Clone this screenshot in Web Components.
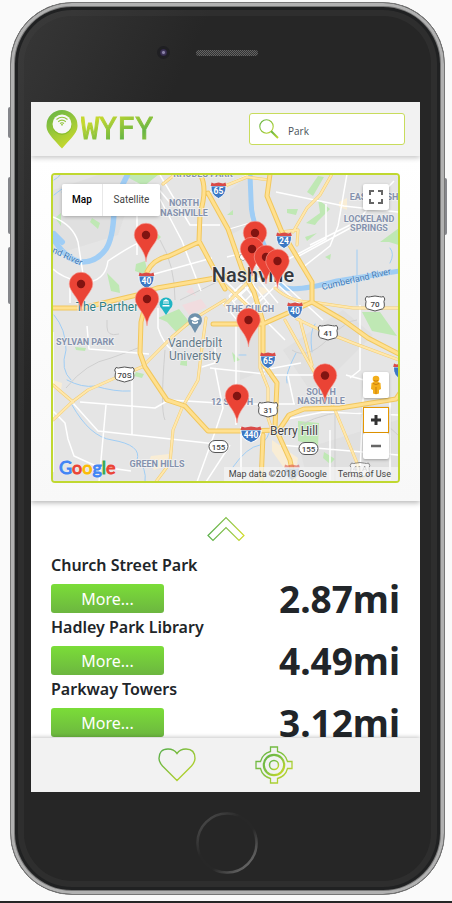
<!DOCTYPE html>
<html lang="en">
<head>
<meta charset="utf-8">
<meta name="viewport" content="width=device-width, initial-scale=1">
<title>WYFY</title>
<style>
html, body { margin: 0; }
body { height: 100vh; box-sizing: border-box; background: #fafafa; border-bottom: 2px solid #262626; padding: 2px 7px 6px 10px; color: #212529; font-family: "Noto Sans", "Open Sans", sans-serif; }
</style>
</head>
<body>
<phone-frame>
  <app-header slot="screen"></app-header>
  <map-panel slot="screen"></map-panel>
  <place-list slot="screen">
    <place-item distance="2.87mi">Church Street Park</place-item>
    <place-item distance="4.49mi">Hadley Park Library</place-item>
    <place-item distance="3.12mi">Parkway Towers</place-item>
  </place-list>
  <app-nav slot="screen"></app-nav>
</phone-frame>
<script>
function define(name, html) {
  const template = document.createElement('template');
  template.innerHTML = html;
  customElements.define(name, class extends HTMLElement {
    constructor() {
      super();
      this.attachShadow({ mode: 'open' }).append(template.content.cloneNode(true));
    }
    connectedCallback() {
      const out = this.shadowRoot.querySelector('[data-distance]');
      if (out) out.textContent = this.getAttribute('distance');
    }
  });
}

define('phone-frame', `
<style>
:host { display: flex; flex-direction: column; position: relative; box-sizing: border-box; height: 100%; padding: 0 24px 0 20px; border: 1px solid #777; border-radius: 62px;
  background: linear-gradient(115deg, #383838 0, #262626 24%) #262626;
  box-shadow: inset 0 0 0 3px #b1b1b1, inset 0 0 0 4px #777, inset 0 0 0 7px #202122, inset 0 0 0 13px rgba(70,70,70,.28); }
.top { flex: none; height: 99px; display: grid; grid-template-columns: 1fr 62px 1fr; align-items: center; padding-left: 3px; }
.camera { justify-self: end; margin-right: 26px; width: 7px; height: 7px; border-radius: 50%; border: 3px solid #1f1f22; background: radial-gradient(circle, #8a82a8 0 1px, #40365a 2px, #28203c 4px); }
.speaker { height: 6px; border-radius: 4px; background: repeating-conic-gradient(#333 0 25%, #646464 0 50%) 0 0 / 2px 2px; }
.screen { flex: 1; min-height: 0; display: flex; flex-direction: column; overflow: hidden; background: #fff; }
.bottom { flex: none; height: 102px; display: grid; place-items: center; padding-left: 3px; }
.home { width: 62px; height: 62px; padding: 0; border: 0; border-radius: 50%; background: none; }
.home svg { display: block; }
.side { position: absolute; left: -3px; width: 2px; background: #85868b; border-radius: 2px 0 0 2px; }
.a { top: 104px; height: 31px; } .b { top: 174px; height: 57px; } .c { top: 244px; height: 57px; }
.d { top: 175px; height: 57px; left: auto; right: -3px; border-radius: 0 2px 2px 0; }
</style>
<i class="side a"></i><i class="side b"></i><i class="side c"></i><i class="side d"></i>
<div class="top"><span class="camera"></span><span class="speaker"></span></div>
<div class="screen"><slot name="screen"></slot></div>
<div class="bottom"><button class="home" aria-label="Home"><svg width="62" height="62" viewBox="0 0 62 62" fill="none"><defs><linearGradient id="h" x1="0" y1="0" x2="1" y2="1"><stop stop-color="#555"/><stop offset=".38" stop-color="#272727"/><stop offset=".6" stop-color="#272727"/><stop offset=".9" stop-color="#6c6c6c"/></linearGradient></defs><circle cx="31" cy="31" r="29.5" stroke="url(#h)" stroke-width="2.5"/></svg></button></div>`);

define('app-header', `
<style>
:host { flex: none; position: relative; z-index: 2; display: flex; align-items: center; justify-content: space-between; height: 54px; padding: 0 15px; background: #f2f2f2; box-shadow: 0 2px 5px rgba(0,0,0,.22); }
.brand { display: flex; align-items: center; gap: 3px; text-decoration: none; }
.brand span { font: 30px/38px "DejaVu Sans Mono", monospace; background: linear-gradient(160deg, #c5d82e 22%, #67b544 68%, #a8cb38); -webkit-background-clip: text; background-clip: text; color: transparent; -webkit-text-stroke: 1px transparent; }
.search { display: flex; align-items: center; gap: 9px; box-sizing: border-box; width: 156px; height: 32px; padding: 0 9px; background: #fff; border: 1px solid #c8dc5c; border-radius: 3px; }
.search svg { flex: none; }
input { min-width: 0; flex: 1; border: 0; outline: 0; padding: 3px 0 0; background: none; color: #495057; font: 10px/14px "Open Sans", sans-serif; }
</style>
<a class="brand" href="#" aria-label="WYFY home"><svg width="32" height="39" viewBox="0 0 32 39"><defs><linearGradient id="g" x1="0" y1="0" x2=".5" y2="1"><stop stop-color="#63b346"/><stop offset="1" stop-color="#c4d82e"/></linearGradient></defs><path fill="url(#g)" d="M16 0A15.5 15.5 0 0 0 .5 15.500C.5 22 4 25.500 16 38.500 28 25.500 31.500 22 31.500 15.500A15.500 15.500 0 0 0 16 0Z"/><circle cx="16" cy="15" r="10" fill="#8bbf2c"/><circle cx="16" cy="14" r="9.500" fill="#f7f7f7"/><path d="M10.500 9.500Q16 5 21.500 9.500M12.200 11.700Q16 8.600 19.800 11.700M14 13.500Q16 12 18 13.500" fill="none" stroke="#91c43c" stroke-width="1.100"/><circle cx="16" cy="14.700" r=".9" fill="#91c43c"/></svg><span>WYFY</span></a>
<label class="search"><svg width="20" height="20" viewBox="0 0 20 20" fill="none"><defs><linearGradient id="s" x1="0" y1="0" x2="1" y2="1"><stop stop-color="#61b246"/><stop offset="1" stop-color="#c0d72f"/></linearGradient></defs><g stroke="url(#s)"><circle cx="7.500" cy="7.500" r="6.700" stroke-width="1.100"/><path d="M12.200 12.200l6.800 6.800" stroke-width="2"/></g></svg><input type="text" value="Park" aria-label="Search"></label>`);

define('map-panel', `
<style>
:host { flex: none; position: relative; z-index: 1; display: block; padding: 17px 20px 18px; background: linear-gradient(#fff, #f8f8f8); box-shadow: 0 2px 5px rgba(0,0,0,.28); }
.map { position: relative; border: 2px solid #c0d830; border-radius: 4px; overflow: hidden; font-family: Roboto, sans-serif; }
.map > svg { display: block; width: 100%; height: auto; }
.map button { border: 0; padding: 0; background: #fff; color: #444; font: inherit; }
.type { position: absolute; top: 9px; left: 9px; display: flex; border-radius: 2px; overflow: hidden; box-shadow: 0 1px 4px -1px rgba(0,0,0,.4); line-height: 32px; }
.map .type button { width: 57px; font-size: 10px; line-height: 32px; }
.map .type button:first-child { width: 41px; color: #000; font-weight: 500; border-right: 1px solid #e8e8e8; }
.tools { position: absolute; right: 9px; top: 9px; bottom: 22px; display: flex; flex-direction: column; align-items: end; }
.tools button { width: 26px; height: 26px; display: grid; place-items: center; border-radius: 2px; box-shadow: 0 1px 3px rgba(0,0,0,.3); }
.tools .person { margin: auto 0 9px; }
.tools .plus { box-sizing: border-box; border: 1px solid #e59700; border-radius: 0; }
.legal { position: absolute; right: 0; bottom: 0; display: flex; gap: 11px; padding: 0 7px 0 5px; background: rgba(245,245,245,.7); font-size: 9px; line-height: 14px; color: #444; }
.legal a { color: inherit; text-decoration: none; }
.brand { position: absolute; left: 6px; bottom: 1px; font: 18px/26px Lato, sans-serif; text-decoration: none; text-shadow: 0 0 1px #fff, 0 0 2px #fff; -webkit-text-stroke: 1px currentColor; }
.bl { color: #4285f4; } .re { color: #ea4335; } .ye { color: #fbbc05; } .gr { color: #34a853; }
</style>
<div class="map">
<svg viewBox="53 175 345 306" role="img" aria-label="Map of Nashville" font-family="Roboto, sans-serif">
<defs>
<g id="pin"><path d="M0 27C-.8 14-11.800 8-11.800 0A11.800 11.800 0 0 1 11.800 0C11.800 8 .8 14 0 27Z" fill="#ea4335" stroke="#f6a59c" stroke-width=".6"/><circle r="4.200" fill="#811411"/></g>
<g id="is"><path d="M-7.500-4Q-8 5 0 8.500 8 5 7.500-4Z" fill="#3c78c3" stroke="#fff" stroke-width=".8"/><path d="M-7-7.500-4.500-6.500 0-7.500 4.500-6.500 7-7.500 7.800-4H-7.800Z" fill="#d94b48"/></g>
<g id="us"><path d="M-8.500-7q2.500 1 4 .2L0-7.500l4.500.7q2 .7 4-.2l1.300 2.500q-1.500 2.500-.5 5 .5 5-3.300 5.300L0 7.500l-6-1.700q-4-.5-3.300-5.300 1-2.500-.5-5z" fill="#fff" stroke="#555" stroke-width="1"/></g>
<g id="major"><path d="M200 174q8 13 0 40l-1 27 16 30 10 18M208 193l20 36 14 40 12 23 9 30v41l14 20-2 44 15 33 4 20M53 308h29l55-13 20-7 70-12M147 272q6-13 22-16l30-14M147 298l-6 24-1 31 5 14 22 33 18 6 23 25h37l34-1 10-15 15-6 36-1 56-9 6-9M270 174l-3 22 14 34 19 32 12 20v20l31 18 25 18 31 16M312 302l-22 10-27 12-50 0M263 435l-2 48"/></g>
<g id="minor"><path d="M53 420l19-18 16-12 27-12 27-11 30-30 20-17 33-20M53 385l20 17M206 318l-4 29-4 33-16 28-9 22-3 33-15 20M220 188l27-11 22 3M332 174l-12 21-13 13-14 24M312 302l41 6h46M297 319l23 11 33 13 46 17M285 320l28 50 22 40 22 53 6 20M300 320l12 45M260 323v45l8 20v30l5 15M280 232l18-2-1 15M163 184l10-8 20-2M225 285l38 35M275 288q15 14 37 14M225 305l40-40"/></g>
</defs>
<path fill="#e5e5e5" d="M50 170h352v320H50z"/>
<g fill="#dcdcdc"><path d="M53 190l45-15h40l-20 60-65 20zM230 190l20-15v50l-20 10zM283 350l60-40 30 25-60 60zM300 450l98-30v62h-90zM240 320l20-10 5 60-25 10z" opacity=".6"/></g>
<g fill="#bfe8b4"><path d="M125 175h33l-14 11-15-8zM55 218l6-5v13zM92 218l8 5-2 6-8-7zM158 234l3 3-3 3-3-2zM136 264l9-3 3 12-5 1-8-3zM107 273l12 12 1 8-9-2zM158 318l21-9 12 15-14 9-10-11zM307 192l11-16 6 1-11 19zM315 225l-9-2 14-10-2-14 12 10-12 12zM287 209l11 0-2 6-9-2zM227 215l6-5v5zM380 242l19-14v17l-10-3zM362 312h18l17 24-25-5zM298 421l21 2-1 23-20-5zM324 452l11 7-5 5-7-6zM75 347l11 1-1 3-9-1zM136 372l8 2-2 4-8-2zM181 360l6 1v5l-7-1zM232 352l8 8-6 2zM305 237l12-4-10 8zM325 257l6-3-1 6z"/></g>
<g fill="#f9edd5"><path d="M53 380l9 3-1 8-8-3zM151 456l18-2-3 12-12 4-5-9zM272 440l26 18-2 13-12-3-12-17zM339 202l8-4v12l-8-3zM258 286l12 4-9 6z"/></g>
<g fill="#f1dcdf"><path d="M182 305l19-6 6 8-18 8zM186 292l6-5 4 9z"/></g>
<g fill="none" stroke="#9fcdf5" stroke-linecap="round" stroke-linejoin="round">
<path stroke-width="5.500" d="M128 174Q116 196 114 212 113 238 106 249 96 263 80 262 65 258 54 240"/><path stroke-width="6" d="M54 234l8 8"/><path stroke-width="5" d="M250 174l1 26q0 18 7 30l14 35q6 20 14 23 14 3 51-7l62-10"/>
<path stroke-width="1" d="M54 180q9-6 5-5M54 195q15-12 8-3M54 315q12 14 12 35-6 20 5 30M67 380q15 8 28 6 20 6 35 5M72 405q18 32 40 35 30 5 25 20 10 8 8 22M233 467q14-20 27-22 10-8 9-15M390 263q5-9 0-15M357 305v-55M312 352q-3-20 3-28M296 353q-12 23-9 30M239 355h7"/>
</g>
<g fill="none" stroke="#cfcfcf"><path d="M66 388q20-25 45-30 28-10 31-12M107 320v7q0 10 12 7M160 240q15 25 15 60M292 350q15 10 35-10 20-20 30-20M335 482v-70M165 350q-5 60 0 70M180 300l45-22M300 425q60-30 98 10"/></g>
<g fill="none" stroke="#fff" stroke-width="1.500" stroke-linejoin="round">
<path d="M53 217q20 8 25 25l5 32M53 269q8 8 27 13M70 278v25M80 282q25 2 28-21 30-20 37-20M137 215v40M160 199l22 42 19 50M155 185l17 20M147 276l65-18"/>
<path d="M160 175l30 50h30M208 193l40-18M158 308v20q5 15 14 22M87 326l2 23 60 5M132 377v58M53 332v140M72 402l26 29 127 14M80 402l75 6 14-8 50 3M106 405l-7 77M53 411l12 12 3 16 6 17 22 10 35 5M202 367l13-4 0-15M215 368l8 40-8 24-18 50M230 445l-24 37M236 325v100M210 368l55 6M263 370l38-7M268 375h45M288 376l6 28M235 404h60"/>
<path d="M276 192l68 14 55 6M347 174l-9 52-8 20-28 22M326 204v35l-60 32M350 225l-40 20M297 257l57-31 15-19 25-26M240 250l60 55M263 265l60 55M225 280l60 60M225 305l35-27M240 320l45-43M360 305v65l-10 8M346 375l18 5-4 92M283 420l40-8 75 3M280 445l119 10M330 430v50M390 400v80M241 427v55"/>
<path stroke-width="1.300" d="M229 296l13-12M233 302l17-16M237 309l18-18M241 316l20-20M247 321l20-20M256 276l22 27M250 281l22 27M243 284l20 26M236 289l17 23M229 296l15 20M222 302l15 18M265 308l-18 18M226 230l27-8M227 257l40-10"/>
</g>
<g fill="none" stroke-linejoin="round" stroke-linecap="round">
<use href="#minor" stroke="#f3cd70" stroke-width="3"/><use href="#minor" stroke="#ffe7ac" stroke-width="2"/>
<use href="#major" stroke="#f1c75e" stroke-width="5"/><use href="#major" stroke="#ffe08f" stroke-width="3"/>
</g>
<g text-anchor="middle" font-size="9" font-weight="700" fill="#8491ad" stroke="#f2f2f2" stroke-width="1.500" paint-order="stroke">
<text x="184" y="206">NORTH</text><text x="184" y="216">NASHVILLE</text><text x="203" y="177">RHODES PARK</text><text x="374" y="200">EAST NASH</text><text x="369" y="222">LOCKELAND</text><text x="369" y="231">SPRINGS</text><text x="250" y="312">THE GULCH</text><text x="85" y="345">SYLVAN PARK</text><text x="232" y="405">12 SOUTH</text><text x="321" y="395">SOUTH</text><text x="321" y="404">NASHVILLE</text><text x="157" y="467">GREEN HILLS</text>
<g font-size="12" font-weight="400" fill="#627989"><text x="195" y="347">Vanderbilt</text><text x="195" y="360">University</text></g>
<text x="294" y="435" font-size="12" font-weight="400" fill="#444">Berry Hill</text>
<text x="253" y="282" font-size="20" font-weight="500" fill="#35383d">Nashville</text><circle cx="243" cy="257" r="3" fill="#fff" stroke="#555" stroke-width="1"/>
<text x="107" y="311" font-size="12" font-weight="400" fill="#317f85">The Parther</text>
<g font-weight="400" fill="#3d78b5" stroke="#cfe5f8" stroke-width=".8"><text transform="translate(64 258) rotate(25)" font-size="9">and River</text><text transform="translate(357 282) rotate(-13)" font-size="9">Cumberland River</text></g>
</g>
<path d="M166 315l-4-6a6.500 6.500 0 1 1 8 0z" fill="#20b5c4"/><path d="M162.500 305h7v1.500h-7zM163 301l3-2 3 2zM163.500 301h1v3h-1zM165.500 301h1v3h-1zM167.500 301h1v3h-1z" fill="#fff"/>
<path d="M195 333l-4-7a7 7 0 1 1 8 0z" fill="#6f91ac"/><path d="M190 319l5-2.500 5 2.500-5 2.500zM192 321v2q3 2 6 0v-2l-3 1.500z" fill="#fff"/>
<use href="#is" x="218.500" y="190"/><use href="#is" x="284" y="240"/><use href="#is" x="146.500" y="280"/><use href="#is" x="295" y="310"/><use href="#is" x="268" y="360"/><use href="#is" x="292" y="472" opacity=".55"/><use href="#is" x="401" y="371"/><use href="#is" transform="translate(251 434) scale(1.350 1)"/>
<g fill="#fff" font-size="8.500" font-weight="700" text-anchor="middle"><text x="218.500" y="194">65</text><text x="284" y="244">24</text><text x="146.500" y="284">40</text><text x="295" y="314">40</text><text x="268" y="364">65</text><text x="251" y="438">440</text></g>
<use href="#us" x="375" y="303.500"/><use href="#us" x="328" y="332.500"/><use href="#us" x="124.500" y="374.500"/><use href="#us" x="268" y="409.500"/><use href="#us" x="360" y="470" opacity=".65"/>
<g fill="#fff" stroke="#555"><rect x="209" y="440.500" width="19" height="12" rx="6"/><rect x="299" y="442.500" width="19" height="12" rx="6"/></g>
<g fill="#444" font-size="8" font-weight="500" text-anchor="middle"><text x="375" y="306.500">70</text><text x="328" y="335.500">41</text><text x="124.500" y="377.500">70S</text><text x="268" y="412.500">31</text><text x="218.500" y="449.500">155</text><text x="308.500" y="451.500">155</text><text x="360" y="471" opacity=".5">41A</text></g>
<use href="#pin" x="255" y="233"/><use href="#pin" x="146" y="235"/><use href="#pin" x="252" y="249"/><use href="#pin" x="266" y="257"/><use href="#pin" x="277.500" y="261"/><use href="#pin" x="81" y="284"/><use href="#pin" x="147" y="299"/><use href="#pin" x="248.500" y="320"/><use href="#pin" x="325" y="375.500"/><use href="#pin" x="237" y="396"/>
</svg>
<div class="type"><button>Map</button><button>Satellite</button></div>
<div class="tools">
<button aria-label="Full screen"><svg width="16" height="16" viewBox="0 0 16 16" fill="none" stroke="#666" stroke-width="2"><path d="M2 6V2h4M10 2h4v4M14 10v4h-4M6 14H2v-4"/></svg></button>
<button class="person" aria-label="Street View"><svg width="12" height="20" viewBox="0 0 12 20"><path d="M1.500 8q4.500-3 9 0l.5 6-2 1v3.500q-3 1.300-6 0v-3.500l-2-1z" fill="#f3ae1b"/><circle cx="6" cy="4" r="3.300" fill="#f3ae1b"/><path d="M6 12v7M3 8.500q3 2 6 0M4 5.500q2 1.500 4 0" stroke="#c97c0c" fill="none"/></svg></button>
<button class="plus" aria-label="Zoom in"><svg width="12" height="12" viewBox="0 0 12 12" stroke="#333" stroke-width="3"><path d="M1 6h10M6 1v10"/></svg></button>
<button aria-label="Zoom out"><svg width="12" height="12" viewBox="0 0 12 12" stroke="#666" stroke-width="2.500"><path d="M1 6h10"/></svg></button>
</div>
<a class="brand" href="#"><span class="bl">G</span><span class="re">o</span><span class="ye">o</span><span class="bl">g</span><span class="gr">l</span><span class="re">e</span></a>
<div class="legal"><span>Map data ©2018 Google</span><a href="#">Terms of Use</a></div>
</div>`);

define('place-list', `
<style>
:host { flex: 1; min-height: 0; display: block; overflow: hidden; padding: 0 20px; }
.toggle { display: block; margin: 15px auto 11px; padding: 0; border: 0; background: none; }
.toggle svg { display: block; }
.items { display: grid; gap: 2px; }
</style>
<button class="toggle" aria-label="Expand list"><svg width="38" height="26" viewBox="0 0 38 26" fill="none"><defs><linearGradient id="u"><stop stop-color="#5bb04a"/><stop offset=".6" stop-color="#8bc34a"/><stop offset="1" stop-color="#d2dc28"/></linearGradient></defs><path d="M1 19.500 19 1.500 37 19.500 32 24.500 19 11.500 6 24.500Z" stroke="url(#u)" stroke-width="1.200"/></svg></button>
<div class="items"><slot></slot></div>`);

define('place-item', `
<style>
:host { display: grid; grid-template-columns: auto 1fr; grid-template-rows: 24px 29px; row-gap: 7px; }
h2 { grid-column: 1 / 3; margin: 0; font: 600 16px/24px "Noto Sans", sans-serif; white-space: nowrap; }
button { width: 113px; padding: 2px 0 0; border: 0; border-radius: 3px; background: linear-gradient(#7bdd38, #6cb640); color: #fff; font: 16px/27px "Noto Sans", sans-serif; }
strong { justify-self: end; font: 700 37px/30px "Noto Sans", sans-serif; }
</style>
<h2><slot></slot></h2><button>More...</button><strong data-distance></strong>`);

define('app-nav', `
<style>
:host { flex: none; position: relative; z-index: 2; display: flex; justify-content: center; align-items: center; gap: 59px; height: 54px; background: #f2f2f2; box-shadow: 0 -1px 4px rgba(0,0,0,.22); }
button { padding: 0; border: 0; background: none; }
svg { display: block; }
</style>
<button aria-label="Favourites"><svg width="38" height="38" viewBox="0 0 38 38" fill="none"><defs><linearGradient id="n" x1="0" y1="0" x2="1" y2="1"><stop stop-color="#56ae4a"/><stop offset="1" stop-color="#cbdb2b"/></linearGradient></defs><path d="M19 34.500 4.500 20Q1 16 1 12.500 1 3 10 3 16 3 19 7.500 22 3 28 3 37 3 37 12.500 37 16 33.500 20Z" stroke="url(#n)" stroke-width="1.400"/></svg></button>
<button aria-label="My location"><svg width="38" height="38" viewBox="0 0 38 38" fill="none"><defs><linearGradient id="t" x1="0" y1="0" x2="1" y2="1"><stop stop-color="#63b346"/><stop offset=".5" stop-color="#84c340"/><stop offset="1" stop-color="#d2dc28"/></linearGradient></defs><g stroke="url(#t)" stroke-width="1.300"><path d="M15.500 5.500V1H22.500V5.500A14 14 0 0 1 32.500 15.500H37V22.500H32.500A14 14 0 0 1 22.500 32.500V37H15.500V32.500A14 14 0 0 1 5.500 22.500H1V15.500H5.500A14 14 0 0 1 15.500 5.500Z"/><circle cx="19" cy="19" r="10.200" stroke-width="2.200"/><circle cx="19" cy="19" r="4.500" stroke-width="1.500"/></g></svg></button>`);
</script>
</body>
</html>
